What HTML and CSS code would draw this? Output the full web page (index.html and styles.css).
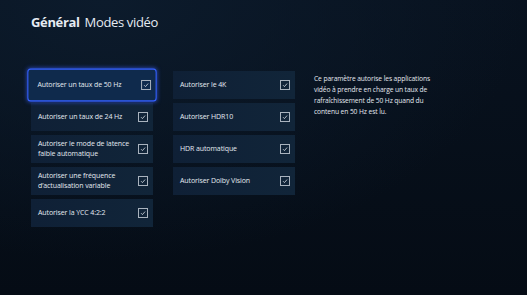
FILE: index.html
```html
<!DOCTYPE html>
<html lang="fr">
<head>
<meta charset="utf-8">
<link rel="stylesheet" href="styles.css">
</head>
<body>
<div class="screen">
  <header class="title"><b>Général</b> Modes vidéo</header>
  <main class="content">
    <div class="col">
      <div class="card focused"><span>Autoriser un taux de 50 Hz</span><i class="cb"><svg viewBox="0 0 10 10"><path d="M2.5 5.2 L4.3 7 L7.6 3.2"/></svg></i></div>
      <div class="card"><span>Autoriser un taux de 24 Hz</span><i class="cb"><svg viewBox="0 0 10 10"><path d="M2.5 5.2 L4.3 7 L7.6 3.2"/></svg></i></div>
      <div class="card"><span>Autoriser le mode de latence faible automatique</span><i class="cb"><svg viewBox="0 0 10 10"><path d="M2.5 5.2 L4.3 7 L7.6 3.2"/></svg></i></div>
      <div class="card"><span>Autoriser une fréquence d’actualisation variable</span><i class="cb"><svg viewBox="0 0 10 10"><path d="M2.5 5.2 L4.3 7 L7.6 3.2"/></svg></i></div>
      <div class="card"><span>Autoriser la YCC 4:2:2</span><i class="cb"><svg viewBox="0 0 10 10"><path d="M2.5 5.2 L4.3 7 L7.6 3.2"/></svg></i></div>
    </div>
    <div class="col">
      <div class="card"><span>Autoriser le 4K</span><i class="cb"><svg viewBox="0 0 10 10"><path d="M2.5 5.2 L4.3 7 L7.6 3.2"/></svg></i></div>
      <div class="card"><span>Autoriser HDR10</span><i class="cb"><svg viewBox="0 0 10 10"><path d="M2.5 5.2 L4.3 7 L7.6 3.2"/></svg></i></div>
      <div class="card"><span>HDR automatique</span><i class="cb"><svg viewBox="0 0 10 10"><path d="M2.5 5.2 L4.3 7 L7.6 3.2"/></svg></i></div>
      <div class="card"><span>Autoriser Dolby Vision</span><i class="cb"><svg viewBox="0 0 10 10"><path d="M2.5 5.2 L4.3 7 L7.6 3.2"/></svg></i></div>
    </div>
    <p class="desc">Ce paramètre autorise les applications vidéo à prendre en charge un taux de rafraîchissement de 50 Hz quand du contenu en 50 Hz est lu.</p>
  </main>
</div>
</body>
</html>
```

FILE: styles.css
```css
html, body {
  margin: 0;
  padding: 0;
}
body {
  width: 527px;
  height: 295px;
  overflow: hidden;
  font-family: "Open Sans", "Noto Sans", sans-serif;
  color: #e3e8ef;
  background:
    radial-gradient(ellipse 420px 260px at 20% 0%, #0c1b2c 0%, rgba(12,27,44,0) 100%),
    linear-gradient(180deg, #08121f 0%, #050c15 100%);
}
.screen {
  padding: 12px 0 0 31px;
}
.title {
  font-size: 13px;
  line-height: 20px;
  letter-spacing: -0.35px;
  color: #e6ebf2;
}
.title b {
  font-weight: 700;
  margin-right: 2px;
}
.content {
  display: flex;
  align-items: flex-start;
  margin-top: 39px;
}
.col {
  display: flex;
  flex-direction: column;
  gap: 4px;
  width: 122px;
}
.col + .col {
  margin-left: 20px;
}
.card {
  height: 28px;
  box-sizing: border-box;
  background: linear-gradient(90deg, #0f2036 0%, #112539 100%);
  display: flex;
  align-items: center;
  justify-content: space-between;
  padding: 0 5px 0 7px;
  font-size: 7px;
  line-height: 10px;
  letter-spacing: -0.1px;
  color: #e4eaf1;
}
.card span {
  max-width: 95px;
}
.card.focused {
  background: #0f2a4c;
  border: 1.5px solid #3460ff;
  border-radius: 3px;
  box-shadow: 0 0 4px rgba(60,100,255,0.7);
  transform: scale(1.06, 1.18);
  padding-left: 6px;
  padding-right: 4px;
}
.card.focused span, .card.focused .cb {
  transform: scale(0.94, 0.85);
}
.cb {
  width: 10px;
  height: 10px;
  box-sizing: border-box;
  border: 1px solid #a9b3be;
  flex: none;
  display: block;
}
.cb svg {
  display: block;
  width: 8px;
  height: 8px;
}
.cb path {
  fill: none;
  stroke: #d8dee6;
  stroke-width: 1;
}
.desc {
  margin: 2px 0 0 19px;
  width: 130px;
  font-size: 6.7px;
  line-height: 11px;
  letter-spacing: -0.1px;
  color: #e3e8ef;
}
```
